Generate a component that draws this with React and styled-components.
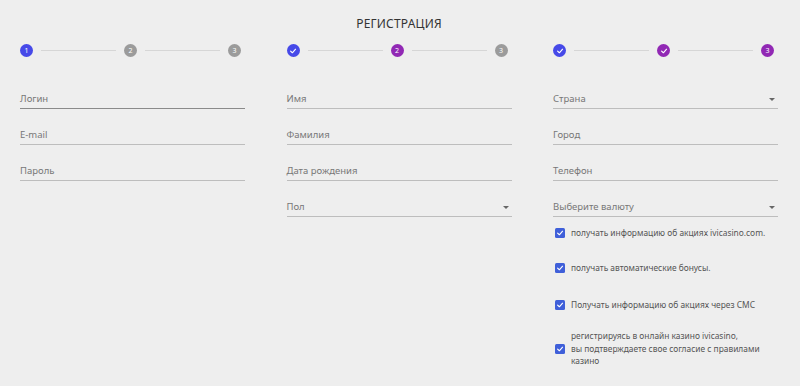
import styled, { createGlobalStyle } from "styled-components";

const GlobalStyle = createGlobalStyle`
  html, body {
    margin: 0;
    padding: 0;
    background: #eeeeee;
    font-family: "Noto Sans", "Open Sans", sans-serif;
  }
`;

const Page = styled.div`
  width: 800px;
  height: 386px;
  box-sizing: border-box;
  padding: 16px 22px 0 20px;
  background: #eeeeee;
  overflow: hidden;
`;

const Title = styled.h1`
  margin: 0;
  text-align: center;
  font-size: 12px;
  font-weight: 400;
  color: #333;
  letter-spacing: 0.2px;
  line-height: 16px;
`;

const Columns = styled.div`
  display: flex;
  justify-content: space-between;
  margin-top: 12px;
`;

const Column = styled.div`
  width: 225px;
  display: flex;
  flex-direction: column;
`;

const Stepper = styled.div`
  display: flex;
  align-items: center;
  width: 221px;
  height: 13px;
  margin-bottom: 32px;
`;

const Dot = styled.div`
  width: 13px;
  height: 13px;
  border-radius: 50%;
  flex: none;
  display: flex;
  align-items: center;
  justify-content: center;
  color: #fff;
  font-size: 7px;
  background: ${(p) =>
    p.$state === "blue" ? "#4649e8" : p.$state === "purple" ? "#9128b4" : "#9b9b9b"};
`;

const Line = styled.div`
  flex: 1;
  height: 1px;
  background: #d6d6d6;
  margin: 0 8px;
`;

const Fields = styled.div`
  display: flex;
  flex-direction: column;
  gap: 16px;
`;

const Field = styled.div`
  height: 20px;
  display: flex;
  align-items: flex-end;
  justify-content: space-between;
  padding-bottom: 3px;
  box-sizing: border-box;
  border-bottom: 1px solid ${(p) => (p.$focused ? "#8a8a8a" : "#bdbdbd")};
  font-size: 9.5px;
  line-height: 12px;
  color: #777;
`;

const Arrow = styled.span`
  width: 0;
  height: 0;
  border-left: 3.5px solid transparent;
  border-right: 3.5px solid transparent;
  border-top: 3.5px solid #666;
  margin: 0 3px 4px 0;
`;

const Checks = styled.div`
  display: flex;
  flex-direction: column;
  margin-top: 9px;
  padding-left: 2px;
`;

const CheckRow = styled.label`
  display: flex;
  align-items: center;
  gap: 6px;
  min-height: 14px;
  margin-top: ${(p) => p.$space}px;
  font-size: 8.4px;
  line-height: 12.5px;
  color: #555;
`;

const Box = styled.span`
  width: 10px;
  height: 10px;
  border-radius: 1.5px;
  background: #3f5fd9;
  flex: none;
  display: flex;
  align-items: center;
  justify-content: center;
`;

const Check = ({ size = 8 }) => (
  <svg width={size} height={size} viewBox="0 0 10 10">
    <path d="M2 5.2 L4.2 7.2 L8.2 2.8" fill="none" stroke="#fff" strokeWidth="1.4" strokeLinecap="round" strokeLinejoin="round" />
  </svg>
);

const Step = ({ state, label }) => (
  <Dot $state={state}>{label === "check" ? <Check size={8} /> : label}</Dot>
);

const steps = [
  [["blue", "1"], ["gray", "2"], ["gray", "3"]],
  [["blue", "check"], ["purple", "2"], ["gray", "3"]],
  [["blue", "check"], ["purple", "check"], ["purple", "3"]],
];

const fields = [
  [{ t: "Логин", focused: true }, { t: "E-mail" }, { t: "Пароль" }],
  [{ t: "Имя" }, { t: "Фамилия" }, { t: "Дата рождения" }, { t: "Пол", select: true }],
  [{ t: "Страна", select: true }, { t: "Город" }, { t: "Телефон" }, { t: "Выберите валюту", select: true }],
];

const checks = [
  { space: 0, lines: ["получать информацию об акциях ivicasino.com."] },
  { space: 21, lines: ["получать автоматические бонусы."] },
  { space: 23, lines: ["Получать информацию об акциях через СМС"] },
  {
    space: 18,
    lines: [
      "регистрируясь в онлайн казино ivicasino,",
      "вы подтверждаете свое согласие с правилами",
      "казино",
    ],
  },
];

export default function App() {
  return (
    <Page>
      <GlobalStyle />
      <Title>РЕГИСТРАЦИЯ</Title>
      <Columns>
        {steps.map((row, i) => (
          <Column key={i}>
            <Stepper>
              <Step state={row[0][0]} label={row[0][1]} />
              <Line />
              <Step state={row[1][0]} label={row[1][1]} />
              <Line />
              <Step state={row[2][0]} label={row[2][1]} />
            </Stepper>
            <Fields>
              {fields[i].map((f) => (
                <Field key={f.t} $focused={f.focused}>
                  <span>{f.t}</span>
                  {f.select && <Arrow />}
                </Field>
              ))}
            </Fields>
            {i === 2 && (
              <Checks>
                {checks.map((c) => (
                  <CheckRow key={c.lines[0]} $space={c.space}>
                    <Box>
                      <Check size={8} />
                    </Box>
                    <span>
                      {c.lines.map((l, k) => (
                        <span key={k}>
                          {l}
                          {k < c.lines.length - 1 && <br />}
                        </span>
                      ))}
                    </span>
                  </CheckRow>
                ))}
              </Checks>
            )}
          </Column>
        ))}
      </Columns>
    </Page>
  );
}
